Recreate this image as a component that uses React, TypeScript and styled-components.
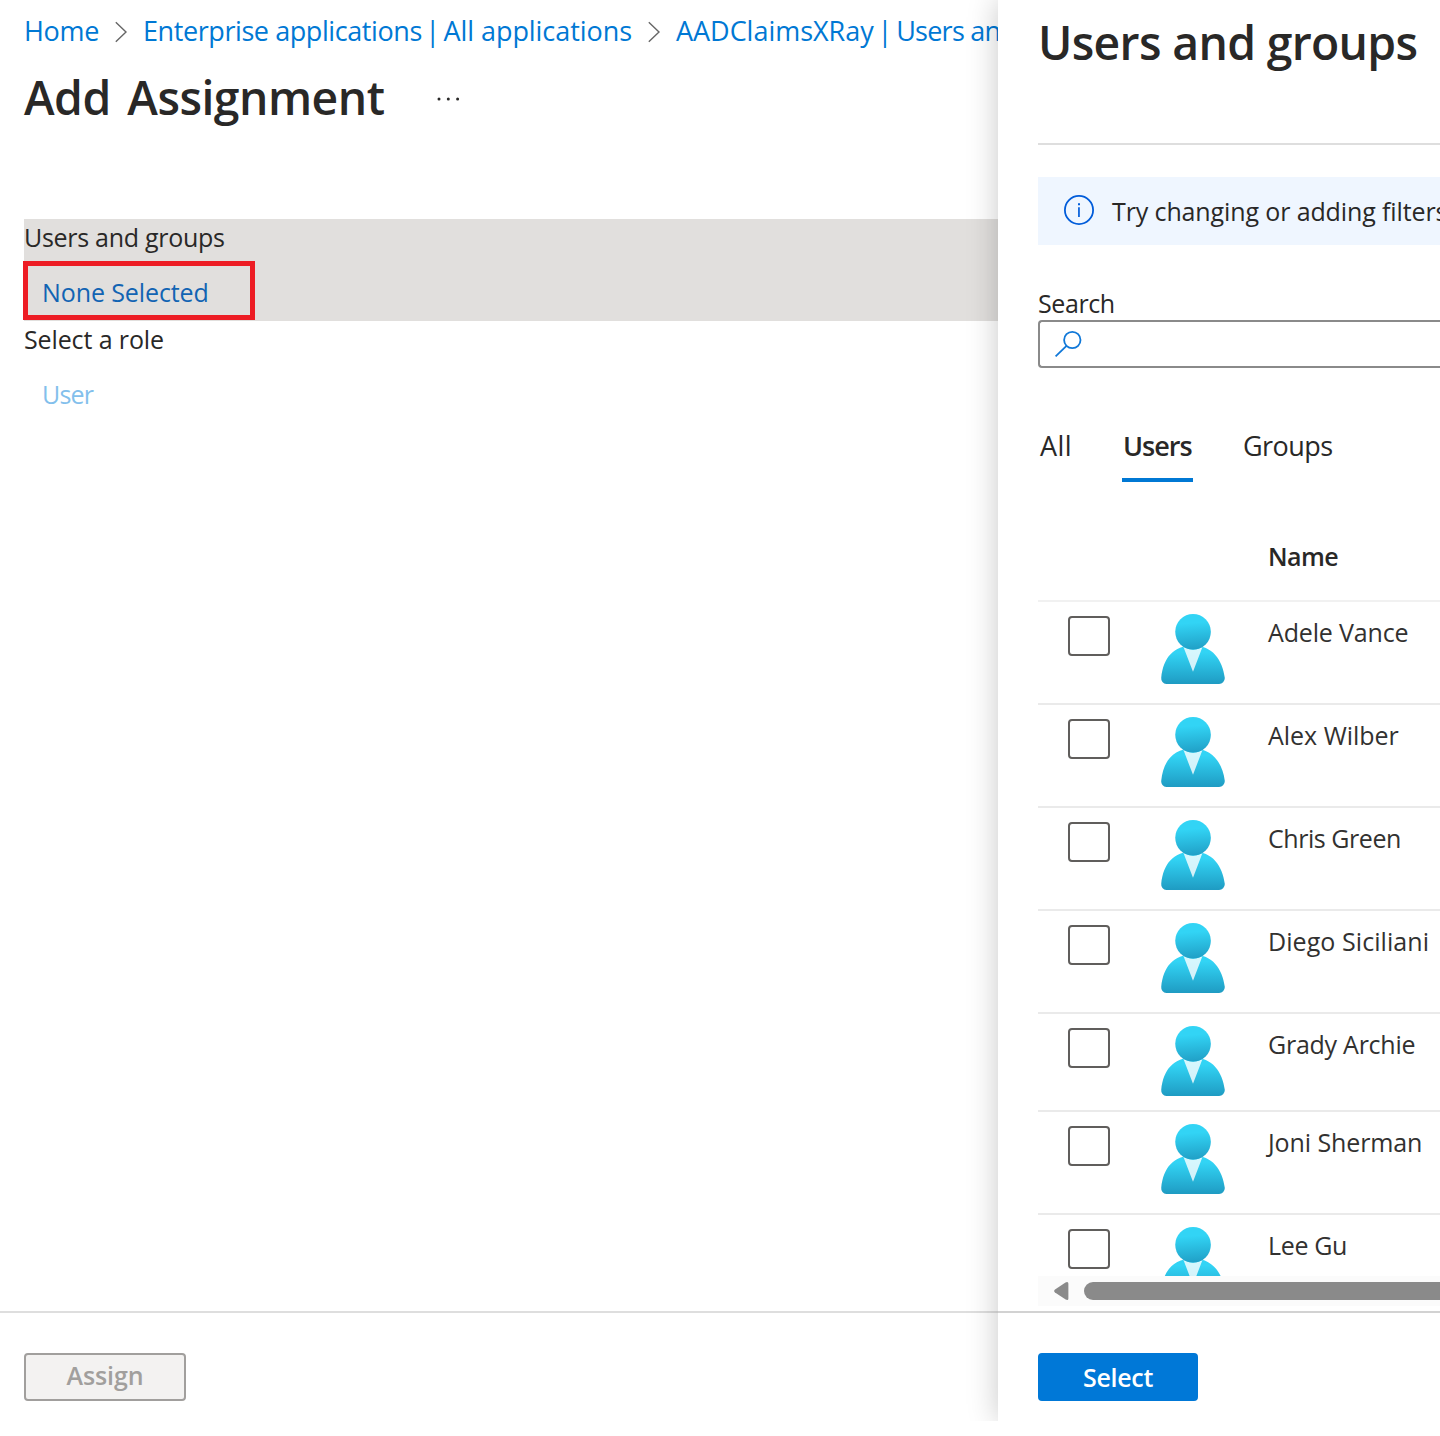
import React from "react";
import styled, { createGlobalStyle } from "styled-components";

const GlobalStyle = createGlobalStyle`
  *, *::before, *::after { box-sizing: border-box; }
  body {
    margin: 0;
    background: #fff;
    color: #292827;
    font-family: "Open Sans", "Noto Sans", sans-serif;
    font-size: 25px;
    line-height: 36px;
    overflow: hidden;
  }
`;

const Portal = styled.div`
  display: grid;
  grid-template-columns: 998px 442px;
  width: 1440px;
  height: 1421px;
  overflow: hidden;
`;

const IconDefs = styled.svg`
  position: absolute;
  width: 0;
  height: 0;
`;

const Text = styled.span<{ $track?: number; $wordGap?: number }>`
  display: block;
  white-space: nowrap;
  letter-spacing: ${(p) => p.$track ?? 0}px;
  word-spacing: ${(p) => p.$wordGap ?? 0}px;
`;

/* ---------- Assignment blade ---------- */

const Blade = styled.main`
  display: flex;
  flex-direction: column;
  min-width: 0;
  overflow: hidden;
`;

const Breadcrumb = styled.nav`
  display: flex;
  align-items: center;
  height: 40px;
  margin-top: 11px;
  padding-left: 24px;
`;

const Crumb = styled.a<{ $width?: number }>`
  display: flex;
  flex: none;
  width: ${(p) => (p.$width ? `${p.$width}px` : "auto")};
  color: #0078d4;
  font-size: 27px;
  line-height: 40px;
`;

const Pipe = styled.span`
  width: 22.5px;
  text-align: center;
`;

const CrumbChevron = styled.svg`
  flex: none;
  margin: 2px 16px 0;
`;

const TitleRow = styled.header`
  display: flex;
  align-items: center;
  gap: 52px;
  height: 64px;
  margin-top: 15px;
  padding-left: 24px;
`;

const Title = styled(Text).attrs({ as: "h1" })`
  margin: 0;
  font-size: 46.3px;
  font-weight: 600;
  line-height: 64px;
`;

const MoreDots = styled.svg`
  margin-top: 1px;
`;

const Fields = styled.div`
  flex: 1;
  margin: 89px 0 0 24px;
`;

const Field = styled.section<{ $active?: boolean }>`
  position: relative;
  height: 102px;
  background: ${(p) => (p.$active ? "#e1dfdd" : "transparent")};
`;

const FieldValue = styled(Text)<{ $disabled?: boolean }>`
  margin-top: 19px;
  padding-left: 18px;
  color: ${(p) => (p.$disabled ? "#83bfec" : "#1264b3")};
`;

const Callout = styled.div`
  position: absolute;
  top: 42px;
  left: -1px;
  width: 232px;
  height: 59px;
  border: 5px solid #ed1c24;
`;

const Footer = styled.footer<{ $inset: number; $line: string }>`
  flex: none;
  height: 110px;
  padding: 40px 0 0 ${(p) => p.$inset}px;
  border-top: 2px solid ${(p) => p.$line};
`;

const Button = styled.button<{ $primary?: boolean }>`
  display: flex;
  align-items: center;
  justify-content: center;
  width: ${(p) => (p.$primary ? 160 : 162)}px;
  height: 48px;
  padding: 0 0 ${(p) => (p.$primary ? 0 : 4)}px;
  border: 2px solid ${(p) => (p.$primary ? "#0078d7" : "#a19f9d")};
  border-radius: 4px;
  background: ${(p) => (p.$primary ? "#0078d7" : "#f3f2f1")};
  color: ${(p) => (p.$primary ? "#fff" : "#a19f9d")};
  font: 600 25px/36px "Open Sans", "Noto Sans", sans-serif;
`;

/* ---------- Picker panel ---------- */

const Panel = styled.aside`
  display: flex;
  flex-direction: column;
  position: relative;
  min-width: 0;
  background: #fff;
  box-shadow: 0 0 29px rgba(0, 0, 0, 0.22);
`;

const PanelBody = styled.div`
  display: flex;
  flex-direction: column;
  height: 1311px;
  padding: 11px 0 5px 40px;
  overflow: hidden;
`;

const Divider = styled.hr`
  width: 100%;
  height: 2px;
  margin: 68px 0 32px;
  border: 0;
  background: #dedede;
`;

const InfoBar = styled.div`
  display: flex;
  flex: none;
  align-items: center;
  gap: 18px;
  height: 68px;
  padding-left: 26px;
  background: #eff6ff;
`;

const InfoIcon = styled.svg`
  flex: none;
  margin-top: -2px;
`;

const SearchLabel = styled(Text).attrs({ as: "label" })`
  margin-top: 41px;
  line-height: 34px;
`;

const SearchBox = styled.div`
  display: flex;
  flex: none;
  align-items: center;
  height: 48px;
  padding-left: 14px;
  border: 2px solid #8a8a8a;
  border-right: 0;
  border-radius: 4px 0 0 4px;
`;

const Tabs = styled.div`
  display: flex;
  flex: none;
  height: 56px;
  margin-top: 58px;
`;

const Tab = styled(Text)<{ $width: number; $indent?: number; $gap?: number; $selected?: boolean }>`
  width: ${(p) => p.$width}px;
  margin-right: ${(p) => p.$gap ?? 0}px;
  padding-left: ${(p) => p.$indent ?? 1}px;
  border-bottom: 4px solid ${(p) => (p.$selected ? "#0078d4" : "transparent")};
  font-size: 27px;
  font-weight: ${(p) => (p.$selected ? 600 : 400)};
  line-height: 40px;
`;

const Columns = styled.div`
  display: grid;
  flex: none;
  grid-template-columns: 120px 110px 1fr;
  align-items: start;
`;

const TableHead = styled(Columns)`
  height: 118px;
  padding-top: 56px;
  font-weight: 600;
`;

const TableBody = styled.div`
  display: flex;
  flex: none;
  flex-direction: column;
  height: 676px;
  overflow: hidden;
`;

const Row = styled(Columns)<{ $height: number; $first?: boolean }>`
  height: ${(p) => p.$height}px;
  border-top: 2px solid ${(p) => (p.$first ? "#f1f1f1" : "#eaeaea")};
`;

const Checkbox = styled.span`
  width: 42px;
  height: 40px;
  margin: 14px 0 0 30px;
  border: 2px solid #605e5c;
  border-radius: 4px;
`;

const Avatar = styled.svg`
  display: block;
  margin-top: 12px;
`;

const PersonName = styled(Text)`
  margin-top: 12px;
  color: #323130;
`;

const Scrollbar = styled.div`
  display: flex;
  flex: none;
  align-items: center;
  gap: 15px;
  height: 30px;
  padding-left: 16px;
  background: #fbfbfb;
`;

const Thumb = styled.div`
  flex: 1;
  height: 18px;
  border-radius: 9px 0 0 9px;
  background: #8a8a8a;
`;

const Chevron = () => (
  <CrumbChevron width="12" height="22" viewBox="0 0 12 22" fill="none" stroke="#666" strokeWidth="1.4">
    <path d="M.8 1.2 11 11 .8 20.8" />
  </CrumbChevron>
);

const UserIcon = () => (
  <Avatar width="70" height="70" viewBox="0 0 18 18">
    <path
      fill="url(#bodyFill)"
      d="M15.72 18a1.45 1.45 0 0 0 1.45-1.45.47.47 0 0 0 0-.17C16.59 11.81 14 8.09 9 8.09S1.34 11.24.83 16.39A1.46 1.46 0 0 0 2.14 18z"
    />
    <path fill="#fff" opacity=".8" d="M9 9.17a4.59 4.59 0 0 1-2.48-.73L9 14.86l2.44-6.38A4.53 4.53 0 0 1 9 9.17z" />
    <circle cx="9.01" cy="4.58" r="4.58" fill="url(#headFill)" />
  </Avatar>
);

const people = [
  { name: "Adele Vance", track: -0.15, height: 103 },
  { name: "Alex Wilber", track: -0.02, height: 103 },
  { name: "Chris Green", track: -0.45, height: 103 },
  { name: "Diego Siciliani", track: 0.07, height: 103 },
  { name: "Grady Archie", track: -0.25, height: 98 },
  { name: "Joni Sherman", track: -0.1, height: 103 },
  { name: "Lee Gu", track: -0.34, height: 103 },
];

export default function App() {
  return (
    <Portal>
      <GlobalStyle />
      <IconDefs>
        <defs>
          <linearGradient id="bodyFill" gradientUnits="userSpaceOnUse" x1="9" y1="6.88" x2="9" y2="20.45">
            <stop offset=".22" stopColor="#32d4f5" />
            <stop offset="1" stopColor="#198ab3" />
          </linearGradient>
          <linearGradient id="headFill" gradientUnits="userSpaceOnUse" x1="8.61" y1="-.4" x2="9.6" y2="11.92">
            <stop offset=".22" stopColor="#32d4f5" />
            <stop offset="1" stopColor="#198ab3" />
          </linearGradient>
        </defs>
      </IconDefs>

      <Blade>
        <Breadcrumb>
          <Crumb $width={75}>
            <Text $track={-0.33}>Home</Text>
          </Crumb>
          <Chevron />
          <Crumb $width={489}>
            <Text $track={-0.42}>Enterprise applications</Text>
            <Pipe>|</Pipe>
            <Text $track={-0.06}>All applications</Text>
          </Crumb>
          <Chevron />
          <Crumb>
            <Text $track={-0.03}>AADClaimsXRay</Text>
            <Pipe>|</Pipe>
            <Text $track={-0.75}>Users an</Text>
          </Crumb>
        </Breadcrumb>
        <TitleRow>
          <Title $track={-0.5} $wordGap={5}>Add Assignment</Title>
          <MoreDots width="24" height="6" viewBox="0 0 24 6" fill="#292827">
            <circle cx="2" cy="3" r="1.5" />
            <circle cx="11.3" cy="3" r="1.5" />
            <circle cx="20.6" cy="3" r="1.5" />
          </MoreDots>
        </TitleRow>
        <Fields>
          <Field $active>
            <Text $track={-0.28}>Users and groups</Text>
            <FieldValue $track={-0.1}>None Selected</FieldValue>
            <Callout />
          </Field>
          <Field>
            <Text $track={-0.12}>Select a role</Text>
            <FieldValue $track={-0.8} $disabled>User</FieldValue>
          </Field>
        </Fields>
        <Footer $inset={24} $line="#dedede">
          <Button disabled>
            <Text $track={-0.08}>Assign</Text>
          </Button>
        </Footer>
      </Blade>

      <Panel>
        <PanelBody>
          <Title $track={-0.66}>Users and groups</Title>
          <Divider />
          <InfoBar>
            <InfoIcon width="30" height="30" viewBox="0 0 30 30">
              <circle cx="15" cy="15" r="14.1" fill="none" stroke="#015cda" strokeWidth="1.8" />
              <path d="M14.1 12.2h1.7V22h-1.7zM14 8.3h2v2h-2z" fill="#015cda" />
            </InfoIcon>
            <Text $track={-0.12}>Try changing or adding filters</Text>
          </InfoBar>
          <SearchLabel $track={-0.4}>Search</SearchLabel>
          <SearchBox>
            <svg width="28" height="28" viewBox="0 0 28 28" fill="none" stroke="#1078d8" strokeWidth="1.8">
              <circle cx="18.3" cy="10" r="8.2" />
              <path d="M12.5 15.8 1.6 26.4" />
            </svg>
          </SearchBox>
          <Tabs>
            <Tab $track={0.4} $width={34} $indent={2} $gap={50}>All</Tab>
            <Tab $track={-1.0} $width={71} $gap={49} $selected>Users</Tab>
            <Tab $track={-0.56} $width={92}>Groups</Tab>
          </Tabs>
          <TableHead>
            <span />
            <span />
            <Text $track={-0.57}>Name</Text>
          </TableHead>
          <TableBody>
            {people.map((p, i) => (
              <Row key={p.name} $height={p.height} $first={i === 0}>
                <Checkbox />
                <UserIcon />
                <PersonName $track={p.track}>{p.name}</PersonName>
              </Row>
            ))}
          </TableBody>
          <Scrollbar>
            <svg width="15" height="18" viewBox="0 0 15 18" fill="#8a8a8a">
              <path d="M11.5.4Q14.4-.8 14.4 1.8V16.4Q14.4 18.8 11.7 17.6L1 10.6Q-.7 9 1 7.6z" />
            </svg>
            <Thumb />
          </Scrollbar>
        </PanelBody>
        <Footer $inset={40} $line="#d2d2d2">
          <Button $primary>
            <Text $track={-0.3}>Select</Text>
          </Button>
        </Footer>
      </Panel>
    </Portal>
  );
}
